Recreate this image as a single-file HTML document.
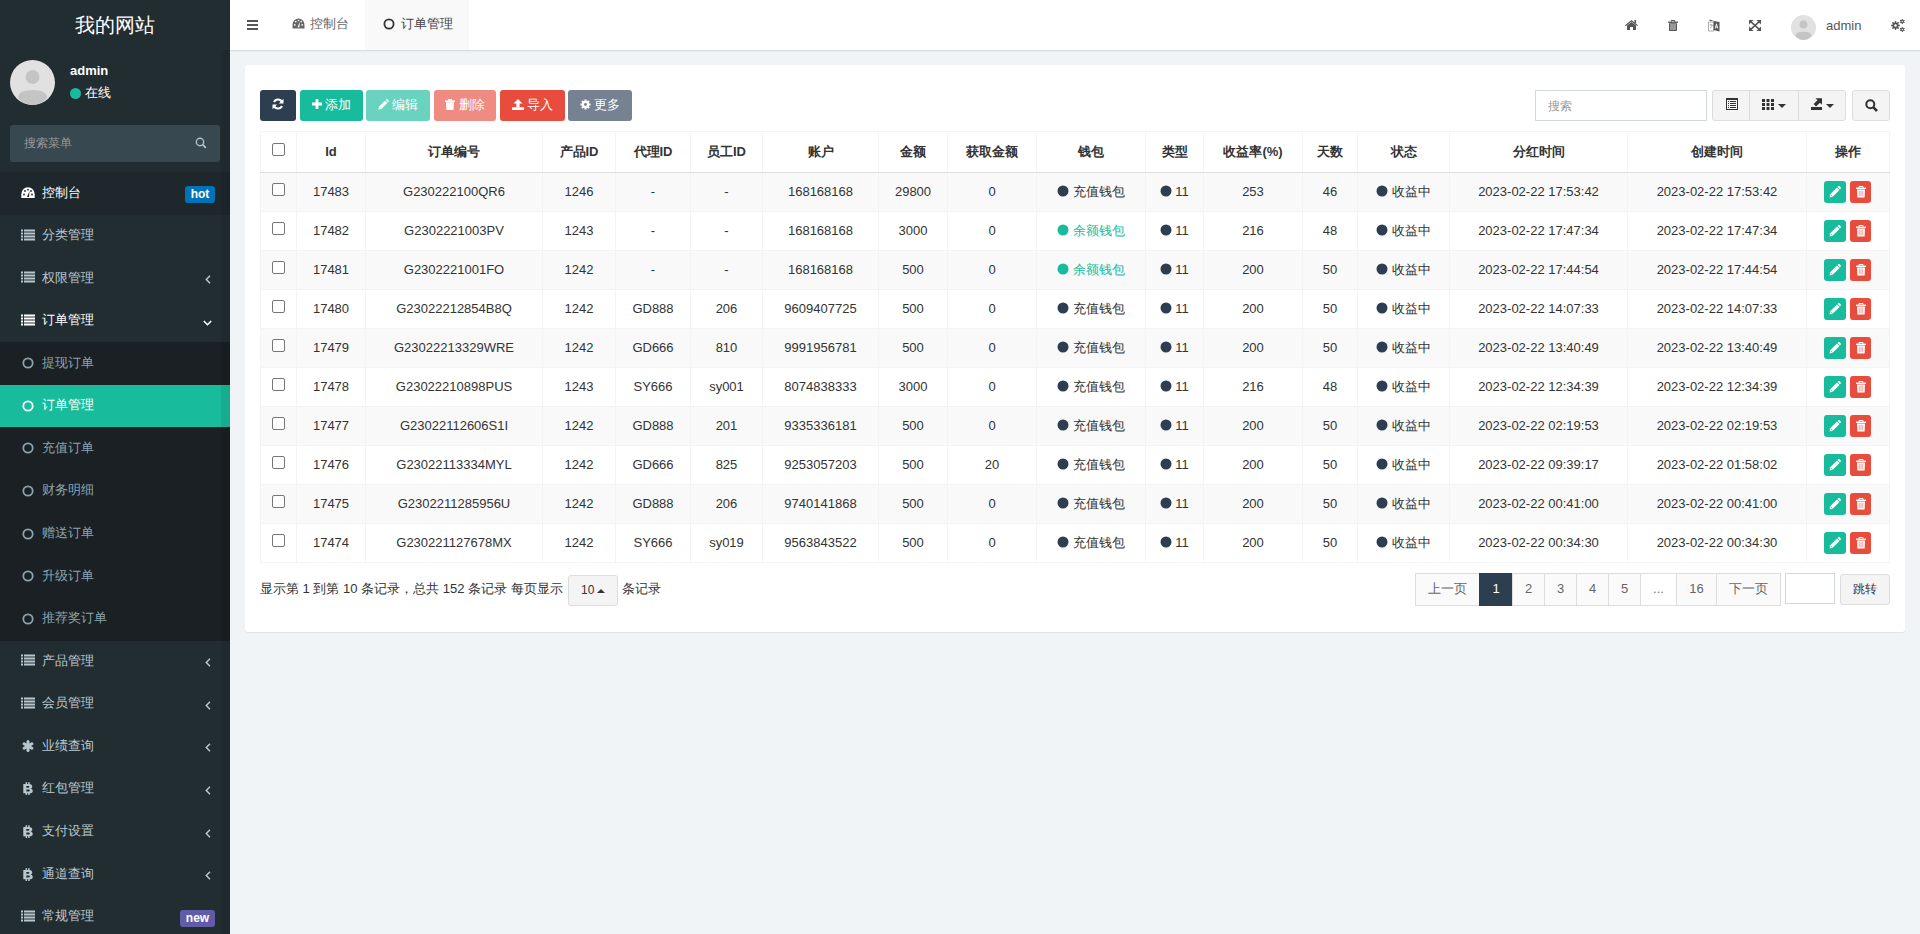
<!DOCTYPE html><html><head><meta charset="utf-8"><title>订单管理</title><style>
*{box-sizing:border-box;margin:0;padding:0}
html,body{width:1920px;height:934px;overflow:hidden}
body{background:#f1f4f6;font-family:"Liberation Sans",sans-serif;font-size:13px;color:#333;position:relative;line-height:1.42857}
.abs{position:absolute}
.sb{position:absolute;left:0;top:0;width:230px;height:934px;background:#222d32}
.logo{position:absolute;left:0;top:0;width:230px;height:50px;line-height:50px;text-align:center;color:#fff;font-size:20px;background:#222d32}
.mi{position:absolute;left:0;width:230px;height:43px;color:#b8c7ce}
.mi .t{position:absolute;left:42px;top:10.5px;font-size:13px;line-height:20px;white-space:nowrap}
.mi svg{position:absolute}
.hdr{position:absolute;left:230px;top:0;width:1690px;height:50px;background:#fff;box-shadow:0 1px 1px rgba(0,0,0,.05)}
.panel{position:absolute;left:245px;top:65px;width:1660px;height:567px;background:#fff;border-radius:3px;box-shadow:0 1px 1px rgba(0,0,0,.07)}
.c{position:absolute;text-align:center;white-space:nowrap;line-height:20px;transform:translate(0.5px,0.5px)}
.btn{position:absolute;height:31px;border-radius:3px;color:#fff;font-size:13px;line-height:30px;text-align:center;white-space:nowrap}
.vl{position:absolute;width:1px;background:#f4f4f4}
.hl{position:absolute;height:1px;background:#f4f4f4}
.cb{position:absolute;width:13px;height:13px;border:1px solid #767676;border-radius:2px;background:#fff}
.ob{position:absolute;width:22px;height:22px;border-radius:3px}.ob svg{position:absolute}
.pg{position:absolute;top:573px;height:33px;border:1px solid #ddd;background:#fafafa;color:#666;text-align:center;line-height:30px;font-size:13px}
</style></head><body>
<div class="sb">
<div class="logo">我的网站</div>
<svg class="abs" style="left:10px;top:60px" width="45" height="45" viewBox="0 0 45 45"><circle cx="22.5" cy="22.5" r="22.5" fill="#e1e1e1"/><circle cx="22.5" cy="17" r="7" fill="#c4c4c4"/><path d="M8 38 Q8 30 22.5 30 Q37 30 37 38 Q30 45 22.5 45 Q15 45 8 38Z" fill="#c4c4c4"/></svg>
<div class="abs" style="left:70px;top:62px;color:#fff;font-weight:bold;font-size:13px;line-height:18px">admin</div>
<div class="abs" style="left:70px;top:88px;width:11px;height:11px;border-radius:50%;background:#18bc9c"></div>
<div class="abs" style="left:85px;top:83px;color:#fff;font-size:13px;line-height:20px">在线</div>
<div class="abs" style="left:10px;top:125px;width:210px;height:37px;background:#374850;border-radius:3px"></div>
<div class="abs" style="left:24px;top:134px;color:#999;font-size:12px;line-height:18px">搜索菜单</div>
<svg class="abs" style="left:195px;top:137px" width="12" height="12" viewBox="0 0 12 12"><circle cx="5" cy="5" r="3.7" fill="none" stroke="#b8c0c4" stroke-width="1.4"/><path d="M7.7 7.7 L10.8 10.8" stroke="#b8c0c4" stroke-width="1.8"/></svg>
<div class="mi" style="top:172.00px;height:43.07px;background:#1e282c;color:#fff">
<div class="t">控制台</div>
<svg style="left:21px;top:15px" width="14" height="11" viewBox="0 0 14 11"><path d="M7 0.3 A6.7 6.7 0 0 0 0.3 7 L0.3 11 L13.7 11 L13.7 7 A6.7 6.7 0 0 0 7 0.3Z" fill="#fff"/><circle cx="3" cy="7.5" r="0.9" fill="#1e282c"/><circle cx="4" cy="4" r="0.9" fill="#1e282c"/><circle cx="7" cy="2.7" r="0.9" fill="#1e282c"/><circle cx="10" cy="4" r="0.9" fill="#1e282c"/><circle cx="11" cy="7.5" r="0.9" fill="#1e282c"/><path d="M6 10 L8.5 4 L8 10Z" fill="#1e282c"/></svg>
<div class="abs" style="left:185px;top:14px;width:30px;height:17px;background:#0073b7;border-radius:3px;color:#fff;font-weight:bold;font-size:12px;line-height:17px;text-align:center">hot</div>
</div>
<div class="mi" style="top:214.57px;height:43.07px;color:#b8c7ce">
<div class="t">分类管理</div>
<svg style="left:21px;top:14px" width="14" height="12" viewBox="0 0 14 12"><g fill="#b8c7ce"><rect x="0" y="0.5" width="2" height="2"/><rect x="3" y="0.5" width="11" height="2"/><rect x="0" y="3.5" width="2" height="2"/><rect x="3" y="3.5" width="11" height="2"/><rect x="0" y="6.5" width="2" height="2"/><rect x="3" y="6.5" width="11" height="2"/><rect x="0" y="9.5" width="2" height="2"/><rect x="3" y="9.5" width="11" height="2"/></g></svg>
</div>
<div class="mi" style="top:257.14px;height:43.07px;color:#b8c7ce">
<div class="t">权限管理</div>
<svg style="left:21px;top:14px" width="14" height="12" viewBox="0 0 14 12"><g fill="#b8c7ce"><rect x="0" y="0.5" width="2" height="2"/><rect x="3" y="0.5" width="11" height="2"/><rect x="0" y="3.5" width="2" height="2"/><rect x="3" y="3.5" width="11" height="2"/><rect x="0" y="6.5" width="2" height="2"/><rect x="3" y="6.5" width="11" height="2"/><rect x="0" y="9.5" width="2" height="2"/><rect x="3" y="9.5" width="11" height="2"/></g></svg>
<svg style="left:205px;top:18px" width="6" height="9" viewBox="0 0 6 9"><path d="M5 0.8 L1.3 4.5 L5 8.2" fill="none" stroke="#b8c7ce" stroke-width="1.5"/></svg>
</div>
<div class="mi" style="top:299.71px;height:43.07px;color:#fff">
<div class="t">订单管理</div>
<svg style="left:21px;top:14px" width="14" height="12" viewBox="0 0 14 12"><g fill="#fff"><rect x="0" y="0.5" width="2" height="2"/><rect x="3" y="0.5" width="11" height="2"/><rect x="0" y="3.5" width="2" height="2"/><rect x="3" y="3.5" width="11" height="2"/><rect x="0" y="6.5" width="2" height="2"/><rect x="3" y="6.5" width="11" height="2"/><rect x="0" y="9.5" width="2" height="2"/><rect x="3" y="9.5" width="11" height="2"/></g></svg>
<svg style="left:203px;top:20px" width="9" height="6" viewBox="0 0 9 6"><path d="M0.8 1 L4.5 4.7 L8.2 1" fill="none" stroke="#fff" stroke-width="1.6"/></svg>
</div>
<div class="mi" style="top:342.28px;height:43.07px;background:#1a2023;color:#8aa4af">
<div class="t">提现订单</div>
<svg style="left:22px;top:15px" width="12" height="12" viewBox="0 0 12 12"><circle cx="6" cy="6" r="4.7" fill="none" stroke="#8aa4af" stroke-width="1.8"/></svg>
</div>
<div class="mi" style="top:384.85px;height:43.07px;background:#18bc9c;color:#fff">
<div class="t">订单管理</div>
<svg style="left:22px;top:15px" width="12" height="12" viewBox="0 0 12 12"><circle cx="6" cy="6" r="4.7" fill="none" stroke="#fff" stroke-width="1.8"/></svg>
</div>
<div class="mi" style="top:427.42px;height:43.07px;background:#1a2023;color:#8aa4af">
<div class="t">充值订单</div>
<svg style="left:22px;top:15px" width="12" height="12" viewBox="0 0 12 12"><circle cx="6" cy="6" r="4.7" fill="none" stroke="#8aa4af" stroke-width="1.8"/></svg>
</div>
<div class="mi" style="top:469.99px;height:43.07px;background:#1a2023;color:#8aa4af">
<div class="t">财务明细</div>
<svg style="left:22px;top:15px" width="12" height="12" viewBox="0 0 12 12"><circle cx="6" cy="6" r="4.7" fill="none" stroke="#8aa4af" stroke-width="1.8"/></svg>
</div>
<div class="mi" style="top:512.56px;height:43.07px;background:#1a2023;color:#8aa4af">
<div class="t">赠送订单</div>
<svg style="left:22px;top:15px" width="12" height="12" viewBox="0 0 12 12"><circle cx="6" cy="6" r="4.7" fill="none" stroke="#8aa4af" stroke-width="1.8"/></svg>
</div>
<div class="mi" style="top:555.13px;height:43.07px;background:#1a2023;color:#8aa4af">
<div class="t">升级订单</div>
<svg style="left:22px;top:15px" width="12" height="12" viewBox="0 0 12 12"><circle cx="6" cy="6" r="4.7" fill="none" stroke="#8aa4af" stroke-width="1.8"/></svg>
</div>
<div class="mi" style="top:597.70px;height:43.07px;background:#1a2023;color:#8aa4af">
<div class="t">推荐奖订单</div>
<svg style="left:22px;top:15px" width="12" height="12" viewBox="0 0 12 12"><circle cx="6" cy="6" r="4.7" fill="none" stroke="#8aa4af" stroke-width="1.8"/></svg>
</div>
<div class="mi" style="top:640.27px;height:43.07px;color:#b8c7ce">
<div class="t">产品管理</div>
<svg style="left:21px;top:14px" width="14" height="12" viewBox="0 0 14 12"><g fill="#b8c7ce"><rect x="0" y="0.5" width="2" height="2"/><rect x="3" y="0.5" width="11" height="2"/><rect x="0" y="3.5" width="2" height="2"/><rect x="3" y="3.5" width="11" height="2"/><rect x="0" y="6.5" width="2" height="2"/><rect x="3" y="6.5" width="11" height="2"/><rect x="0" y="9.5" width="2" height="2"/><rect x="3" y="9.5" width="11" height="2"/></g></svg>
<svg style="left:205px;top:18px" width="6" height="9" viewBox="0 0 6 9"><path d="M5 0.8 L1.3 4.5 L5 8.2" fill="none" stroke="#b8c7ce" stroke-width="1.5"/></svg>
</div>
<div class="mi" style="top:682.84px;height:43.07px;color:#b8c7ce">
<div class="t">会员管理</div>
<svg style="left:21px;top:14px" width="14" height="12" viewBox="0 0 14 12"><g fill="#b8c7ce"><rect x="0" y="0.5" width="2" height="2"/><rect x="3" y="0.5" width="11" height="2"/><rect x="0" y="3.5" width="2" height="2"/><rect x="3" y="3.5" width="11" height="2"/><rect x="0" y="6.5" width="2" height="2"/><rect x="3" y="6.5" width="11" height="2"/><rect x="0" y="9.5" width="2" height="2"/><rect x="3" y="9.5" width="11" height="2"/></g></svg>
<svg style="left:205px;top:18px" width="6" height="9" viewBox="0 0 6 9"><path d="M5 0.8 L1.3 4.5 L5 8.2" fill="none" stroke="#b8c7ce" stroke-width="1.5"/></svg>
</div>
<div class="mi" style="top:725.41px;height:43.07px;color:#b8c7ce">
<div class="t">业绩查询</div>
<svg style="left:22px;top:15px" width="12" height="12" viewBox="0 0 12 12"><g stroke="#b8c7ce" stroke-width="3" stroke-linecap="round"><path d="M6 1.5 V10.5"/><path d="M2.1 3.75 L9.9 8.25"/><path d="M2.1 8.25 L9.9 3.75"/></g><circle cx="6" cy="6" r="2.5" fill="#b8c7ce"/></svg>
<svg style="left:205px;top:18px" width="6" height="9" viewBox="0 0 6 9"><path d="M5 0.8 L1.3 4.5 L5 8.2" fill="none" stroke="#b8c7ce" stroke-width="1.5"/></svg>
</div>
<div class="mi" style="top:767.98px;height:43.07px;color:#b8c7ce">
<div class="t">红包管理</div>
<svg style="left:23px;top:14.5px" width="10" height="13" viewBox="0 0 10 13"><path d="M0.3 2 H6 Q9.3 2 9.3 4.6 Q9.3 6 7.8 6.5 Q9.8 7 9.8 9 Q9.8 11.3 6.4 11.3 H0.3Z M3.3 3.9 V5.7 H5.4 Q6.4 5.7 6.4 4.8 Q6.4 3.9 5.4 3.9Z M3.3 7.4 V9.4 H5.8 Q6.9 9.4 6.9 8.4 Q6.9 7.4 5.8 7.4Z" fill="#b8c7ce" fill-rule="evenodd"/><rect x="2.6" y="0.2" width="1.5" height="2.3" fill="#b8c7ce"/><rect x="5.2" y="0.2" width="1.5" height="2.3" fill="#b8c7ce"/><rect x="2.6" y="10.8" width="1.5" height="2.2" fill="#b8c7ce"/><rect x="5.2" y="10.8" width="1.5" height="2.2" fill="#b8c7ce"/></svg>
<svg style="left:205px;top:18px" width="6" height="9" viewBox="0 0 6 9"><path d="M5 0.8 L1.3 4.5 L5 8.2" fill="none" stroke="#b8c7ce" stroke-width="1.5"/></svg>
</div>
<div class="mi" style="top:810.55px;height:43.07px;color:#b8c7ce">
<div class="t">支付设置</div>
<svg style="left:23px;top:14.5px" width="10" height="13" viewBox="0 0 10 13"><path d="M0.3 2 H6 Q9.3 2 9.3 4.6 Q9.3 6 7.8 6.5 Q9.8 7 9.8 9 Q9.8 11.3 6.4 11.3 H0.3Z M3.3 3.9 V5.7 H5.4 Q6.4 5.7 6.4 4.8 Q6.4 3.9 5.4 3.9Z M3.3 7.4 V9.4 H5.8 Q6.9 9.4 6.9 8.4 Q6.9 7.4 5.8 7.4Z" fill="#b8c7ce" fill-rule="evenodd"/><rect x="2.6" y="0.2" width="1.5" height="2.3" fill="#b8c7ce"/><rect x="5.2" y="0.2" width="1.5" height="2.3" fill="#b8c7ce"/><rect x="2.6" y="10.8" width="1.5" height="2.2" fill="#b8c7ce"/><rect x="5.2" y="10.8" width="1.5" height="2.2" fill="#b8c7ce"/></svg>
<svg style="left:205px;top:18px" width="6" height="9" viewBox="0 0 6 9"><path d="M5 0.8 L1.3 4.5 L5 8.2" fill="none" stroke="#b8c7ce" stroke-width="1.5"/></svg>
</div>
<div class="mi" style="top:853.12px;height:43.07px;color:#b8c7ce">
<div class="t">通道查询</div>
<svg style="left:23px;top:14.5px" width="10" height="13" viewBox="0 0 10 13"><path d="M0.3 2 H6 Q9.3 2 9.3 4.6 Q9.3 6 7.8 6.5 Q9.8 7 9.8 9 Q9.8 11.3 6.4 11.3 H0.3Z M3.3 3.9 V5.7 H5.4 Q6.4 5.7 6.4 4.8 Q6.4 3.9 5.4 3.9Z M3.3 7.4 V9.4 H5.8 Q6.9 9.4 6.9 8.4 Q6.9 7.4 5.8 7.4Z" fill="#b8c7ce" fill-rule="evenodd"/><rect x="2.6" y="0.2" width="1.5" height="2.3" fill="#b8c7ce"/><rect x="5.2" y="0.2" width="1.5" height="2.3" fill="#b8c7ce"/><rect x="2.6" y="10.8" width="1.5" height="2.2" fill="#b8c7ce"/><rect x="5.2" y="10.8" width="1.5" height="2.2" fill="#b8c7ce"/></svg>
<svg style="left:205px;top:18px" width="6" height="9" viewBox="0 0 6 9"><path d="M5 0.8 L1.3 4.5 L5 8.2" fill="none" stroke="#b8c7ce" stroke-width="1.5"/></svg>
</div>
<div class="mi" style="top:895.69px;height:43.07px;color:#b8c7ce">
<div class="t">常规管理</div>
<svg style="left:21px;top:14px" width="14" height="12" viewBox="0 0 14 12"><g fill="#b8c7ce"><rect x="0" y="0.5" width="2" height="2"/><rect x="3" y="0.5" width="11" height="2"/><rect x="0" y="3.5" width="2" height="2"/><rect x="3" y="3.5" width="11" height="2"/><rect x="0" y="6.5" width="2" height="2"/><rect x="3" y="6.5" width="11" height="2"/><rect x="0" y="9.5" width="2" height="2"/><rect x="3" y="9.5" width="11" height="2"/></g></svg>
<div class="abs" style="left:180px;top:14px;width:35px;height:17px;background:#605ca8;border-radius:3px;color:#fff;font-weight:bold;font-size:12px;line-height:17px;text-align:center">new</div>
</div>
<div class="abs" style="left:221px;top:50px;width:9px;height:884px;background:rgba(0,0,0,.08)"></div>
</div>
<div class="hdr"></div>
<div class="abs" style="left:230px;top:50px;width:1690px;height:1px;background:#d9dee1"></div>
<div class="abs" style="left:230px;top:51px;width:1690px;height:1px;background:#e8ecef"></div>
<svg class="abs" style="left:247px;top:20px" width="11" height="10" viewBox="0 0 11 10"><g fill="#555"><rect y="0" width="11" height="2"/><rect y="4" width="11" height="2"/><rect y="8" width="11" height="2"/></g></svg>
<svg class="abs" style="left:292px;top:18px" width="13" height="11" viewBox="0 0 14 12"><path d="M7 0.5 A6.5 6.5 0 0 0 0.5 7 L0.5 11.5 L13.5 11.5 L13.5 7 A6.5 6.5 0 0 0 7 0.5Z" fill="#666"/><circle cx="3" cy="7.5" r="0.9" fill="#fff"/><circle cx="4" cy="4" r="0.9" fill="#fff"/><circle cx="7" cy="2.7" r="0.9" fill="#fff"/><circle cx="10" cy="4" r="0.9" fill="#fff"/><circle cx="11" cy="7.5" r="0.9" fill="#fff"/><path d="M6 10 L8.5 4 L8 10Z" fill="#fff"/></svg>
<div class="abs" style="left:310px;top:14px;color:#666;font-size:13px;line-height:20px">控制台</div>
<div class="abs" style="left:365px;top:0;width:104px;height:50px;background:#f9f9f9"></div>
<svg class="abs" style="left:383px;top:18px" width="12" height="12" viewBox="0 0 12 12"><circle cx="6" cy="6" r="4.6" fill="none" stroke="#333" stroke-width="1.8"/></svg>
<div class="abs" style="left:401px;top:14px;color:#444;font-size:13px;line-height:20px">订单管理</div>
<svg class="abs" style="left:1625px;top:20px" width="13" height="10" viewBox="0 0 13 10"><path d="M6.5 0 L0 5.2 L0.9 6.1 L6.5 1.6 L12.1 6.1 L13 5.2Z" fill="#555"/><path d="M2 5.4 L6.5 1.9 L11 5.4 V10 H8 V7 H5 V10 H2Z" fill="#555"/><rect x="9.5" y="0" width="1.6" height="3.2" fill="#555"/></svg>
<svg class="abs" style="left:1668px;top:20px" width="10" height="11" viewBox="0 0 10 11"><rect x="0" y="1.6" width="10" height="1.3" fill="#555"/><path d="M3.2 1.8 V0.5 H6.8 V1.8" fill="none" stroke="#555" stroke-width="1"/><path d="M1 3.2 H9 V10.2 Q9 11 8.2 11 H1.8 Q1 11 1 10.2Z" fill="#555"/><g fill="#fff" opacity="0.8"><rect x="2.5" y="4" width="1" height="6"/><rect x="4.5" y="4" width="1" height="6"/><rect x="6.5" y="4" width="1" height="6"/></g></svg>
<svg class="abs" style="left:1708px;top:19px" width="12" height="13" viewBox="0 0 12 13"><path d="M0.5 3 H6 V12 H0.5Z" fill="#fff" stroke="#999" stroke-width="0.8"/><path d="M1.5 0.5 L6 2 H1.5Z" fill="#555"/><path d="M5.5 2 L11.5 3 V12.5 L5.5 11Z" fill="#555"/><path d="M7.2 9.5 L8.5 4.8 L9.8 9.5 M7.7 8 H9.3" stroke="#fff" stroke-width="0.9" fill="none"/><path d="M1.8 6 H4.5 M3 5 V6 M2 9 Q4 8 4.5 6" stroke="#888" stroke-width="0.7" fill="none"/></svg>
<svg class="abs" style="left:1749px;top:20px" width="12" height="11" viewBox="0 0 12 11"><g fill="#555"><path d="M0 0 H4.6 L0 4.4Z"/><path d="M12 0 V4.4 L7.4 0Z"/><path d="M0 11 V6.6 L4.6 11Z"/><path d="M12 11 H7.4 L12 6.6Z"/></g><path d="M1.5 1.4 L10.5 9.6 M10.5 1.4 L1.5 9.6" stroke="#555" stroke-width="1.5"/></svg>
<svg class="abs" style="left:1791px;top:15px" width="25" height="25" viewBox="0 0 45 45"><circle cx="22.5" cy="22.5" r="22.5" fill="#e1e1e1"/><circle cx="22.5" cy="17" r="7" fill="#c4c4c4"/><path d="M8 38 Q8 30 22.5 30 Q37 30 37 38 Q30 45 22.5 45 Q15 45 8 38Z" fill="#c4c4c4"/></svg>
<div class="abs" style="left:1826px;top:16px;color:#555;font-size:13px;line-height:20px">admin</div>
<svg class="abs" style="left:1891px;top:19px" width="14" height="13" viewBox="0 0 14 13"><circle cx="4.5" cy="6.5" r="3.0" fill="#555"/><rect x="3.75" y="2.10" width="1.5" height="2.00" fill="#555" transform="rotate(0.0 4.5 6.5)"/><rect x="3.75" y="2.10" width="1.5" height="2.00" fill="#555" transform="rotate(45.0 4.5 6.5)"/><rect x="3.75" y="2.10" width="1.5" height="2.00" fill="#555" transform="rotate(90.0 4.5 6.5)"/><rect x="3.75" y="2.10" width="1.5" height="2.00" fill="#555" transform="rotate(135.0 4.5 6.5)"/><rect x="3.75" y="2.10" width="1.5" height="2.00" fill="#555" transform="rotate(180.0 4.5 6.5)"/><rect x="3.75" y="2.10" width="1.5" height="2.00" fill="#555" transform="rotate(225.0 4.5 6.5)"/><rect x="3.75" y="2.10" width="1.5" height="2.00" fill="#555" transform="rotate(270.0 4.5 6.5)"/><rect x="3.75" y="2.10" width="1.5" height="2.00" fill="#555" transform="rotate(315.0 4.5 6.5)"/><circle cx="4.5" cy="6.5" r="1.3" fill="#fff"/><circle cx="11.3" cy="2.5" r="1.7" fill="#555"/><rect x="10.75" y="0.00" width="1.1" height="1.40" fill="#555" transform="rotate(0.0 11.3 2.5)"/><rect x="10.75" y="0.00" width="1.1" height="1.40" fill="#555" transform="rotate(60.0 11.3 2.5)"/><rect x="10.75" y="0.00" width="1.1" height="1.40" fill="#555" transform="rotate(120.0 11.3 2.5)"/><rect x="10.75" y="0.00" width="1.1" height="1.40" fill="#555" transform="rotate(180.0 11.3 2.5)"/><rect x="10.75" y="0.00" width="1.1" height="1.40" fill="#555" transform="rotate(240.0 11.3 2.5)"/><rect x="10.75" y="0.00" width="1.1" height="1.40" fill="#555" transform="rotate(300.0 11.3 2.5)"/><circle cx="11.3" cy="2.5" r="0.7" fill="#fff"/><circle cx="11.3" cy="10.5" r="1.7" fill="#555"/><rect x="10.75" y="8.00" width="1.1" height="1.40" fill="#555" transform="rotate(0.0 11.3 10.5)"/><rect x="10.75" y="8.00" width="1.1" height="1.40" fill="#555" transform="rotate(60.0 11.3 10.5)"/><rect x="10.75" y="8.00" width="1.1" height="1.40" fill="#555" transform="rotate(120.0 11.3 10.5)"/><rect x="10.75" y="8.00" width="1.1" height="1.40" fill="#555" transform="rotate(180.0 11.3 10.5)"/><rect x="10.75" y="8.00" width="1.1" height="1.40" fill="#555" transform="rotate(240.0 11.3 10.5)"/><rect x="10.75" y="8.00" width="1.1" height="1.40" fill="#555" transform="rotate(300.0 11.3 10.5)"/><circle cx="11.3" cy="10.5" r="0.7" fill="#fff"/></svg>
<div class="panel"></div>
<div class="btn" style="left:260px;top:90px;width:36px;background:#2c3e50"><svg width="12" height="12" viewBox="0 0 12 12" style="vertical-align:-1px"><path d="M10 4.2 A4.4 4.4 0 0 0 2 4" fill="none" stroke="#fff" stroke-width="2"/><path d="M11.5 0.8 V5.5 H6.8Z" fill="#fff"/><path d="M2 7.8 A4.4 4.4 0 0 0 10 8" fill="none" stroke="#fff" stroke-width="2"/><path d="M0.5 11.2 V6.5 H5.2Z" fill="#fff"/></svg></div>
<div class="btn" style="left:300px;top:90px;width:63px;background:#18bc9c"><svg width="10" height="10" viewBox="0 0 10 10" style="vertical-align:-0px"><path d="M3.6 0 H6.4 V3.6 H10 V6.4 H6.4 V10 H3.6 V6.4 H0 V3.6 H3.6Z" fill="#fff"/></svg> 添加</div>
<div class="btn" style="left:366px;top:90px;width:64px;background:#69d3bf"><svg width="11" height="11" viewBox="0 0 12 12" style="vertical-align:-1px"><path d="M0.5 11.5 L1.2 8.3 L7.6 1.9 L10.1 4.4 L3.7 10.8Z" fill="#fff"/><path d="M8.3 1.2 L9.2 0.3 Q9.8 -0.2 10.4 0.4 L11.6 1.6 Q12.1 2.2 11.6 2.8 L10.8 3.7Z" fill="#fff"/></svg> 编辑</div>
<div class="btn" style="left:434px;top:90px;width:62px;background:#ef8b80"><svg width="10" height="11" viewBox="0 0 10 11" style="vertical-align:-1px"><rect x="0" y="1.4" width="10" height="1.5" fill="#fff"/><rect x="3" y="0" width="4" height="1.8" fill="#fff"/><path d="M1 3.3 H9 L8.5 11 H1.5Z" fill="#fff"/></svg> 删除</div>
<div class="btn" style="left:500px;top:90px;width:65px;background:#e74c3c"><svg width="12" height="11" viewBox="0 0 12 11" style="vertical-align:-1px"><path d="M6 0 L10.5 4.5 H7.6 V8 H4.4 V4.5 H1.5Z" fill="#fff"/><rect x="0" y="8.2" width="12" height="2.8" fill="#fff"/></svg> 导入</div>
<div class="btn" style="left:568px;top:90px;width:64px;background:#768291"><svg width="11" height="11" viewBox="0 0 12 12" style="vertical-align:-1px"><g stroke="#fff" stroke-width="2.2"><path d="M6 0.5 V11.5 M0.5 6 H11.5 M2.1 2.1 L9.9 9.9 M2.1 9.9 L9.9 2.1"/></g><circle cx="6" cy="6" r="4" fill="#fff"/><circle cx="6" cy="6" r="1.6" fill="#768291"/></svg> 更多</div>
<div class="abs" style="left:1535px;top:90px;width:172px;height:31px;border:1px solid #d2d6de;background:#fff"></div>
<div class="abs" style="left:1548px;top:96.5px;color:#999;font-size:12px;line-height:18px">搜索</div>
<div class="abs" style="left:1712px;top:90px;width:134px;height:31px;border:1px solid #ddd;border-radius:3px;background:#f4f4f4"></div>
<div class="abs" style="left:1749px;top:90px;width:1px;height:31px;background:#ddd"></div>
<div class="abs" style="left:1798px;top:90px;width:1px;height:31px;background:#ddd"></div>
<div class="abs" style="left:1852px;top:90px;width:38px;height:31px;border:1px solid #ddd;border-radius:3px;background:#f4f4f4"></div>
<svg class="abs" style="left:1726px;top:98px" width="12" height="12" viewBox="0 0 12 12"><rect x="0.5" y="0.5" width="11" height="11" fill="none" stroke="#333" stroke-width="1"/><rect x="0" y="0" width="12" height="2" fill="#333"/><g fill="#333"><rect x="2" y="3" width="1" height="1"/><rect x="4" y="3" width="6" height="1"/><rect x="2" y="5" width="1" height="1"/><rect x="4" y="5" width="6" height="1"/><rect x="2" y="7" width="1" height="1"/><rect x="4" y="7" width="6" height="1"/><rect x="2" y="9" width="1" height="1"/><rect x="4" y="9" width="6" height="1"/></g></svg>
<svg class="abs" style="left:1762px;top:99px" width="12" height="11" viewBox="0 0 12 11"><g fill="#333"><rect x="0" y="0" width="3" height="3"/><rect x="4.5" y="0" width="3" height="3"/><rect x="9" y="0" width="3" height="3"/><rect x="0" y="4" width="3" height="3"/><rect x="4.5" y="4" width="3" height="3"/><rect x="9" y="4" width="3" height="3"/><rect x="0" y="8" width="3" height="3"/><rect x="4.5" y="8" width="3" height="3"/><rect x="9" y="8" width="3" height="3"/></g></svg>
<svg class="abs" style="left:1778px;top:104px" width="8" height="4" viewBox="0 0 8 4"><path d="M0 0 H8 L4 4Z" fill="#333"/></svg>
<svg class="abs" style="left:1811px;top:98px" width="11" height="12" viewBox="0 0 11 12"><path d="M4.5 0.2 H11 V6.7 L9 4.7 L5 8.4 L2.6 6 L6.5 2.2Z" fill="#333"/><rect x="0" y="9" width="11" height="3" fill="#333"/></svg>
<svg class="abs" style="left:1826px;top:104px" width="8" height="4" viewBox="0 0 8 4"><path d="M0 0 H8 L4 4Z" fill="#333"/></svg>
<svg class="abs" style="left:1865px;top:99px" width="13" height="13" viewBox="0 0 13 13"><circle cx="5.3" cy="5.3" r="4" fill="none" stroke="#333" stroke-width="2"/><path d="M8.2 8.2 L12 12" stroke="#333" stroke-width="2.6"/></svg>
<div class="abs" style="left:260px;top:173px;width:1630px;height:38px;background:#f9f9f9"></div>
<div class="abs" style="left:260px;top:251px;width:1630px;height:38px;background:#f9f9f9"></div>
<div class="abs" style="left:260px;top:329px;width:1630px;height:38px;background:#f9f9f9"></div>
<div class="abs" style="left:260px;top:407px;width:1630px;height:38px;background:#f9f9f9"></div>
<div class="abs" style="left:260px;top:485px;width:1630px;height:38px;background:#f9f9f9"></div>
<div class="hl" style="left:260px;top:131px;width:1630px"></div>
<div class="hl" style="left:260px;top:211px;width:1630px"></div>
<div class="hl" style="left:260px;top:250px;width:1630px"></div>
<div class="hl" style="left:260px;top:289px;width:1630px"></div>
<div class="hl" style="left:260px;top:328px;width:1630px"></div>
<div class="hl" style="left:260px;top:367px;width:1630px"></div>
<div class="hl" style="left:260px;top:406px;width:1630px"></div>
<div class="hl" style="left:260px;top:445px;width:1630px"></div>
<div class="hl" style="left:260px;top:484px;width:1630px"></div>
<div class="hl" style="left:260px;top:523px;width:1630px"></div>
<div class="hl" style="left:260px;top:562px;width:1630px"></div>
<div class="vl" style="left:260px;top:131px;height:431px"></div>
<div class="vl" style="left:296px;top:131px;height:431px"></div>
<div class="vl" style="left:365px;top:131px;height:431px"></div>
<div class="vl" style="left:542px;top:131px;height:431px"></div>
<div class="vl" style="left:615px;top:131px;height:431px"></div>
<div class="vl" style="left:690px;top:131px;height:431px"></div>
<div class="vl" style="left:762px;top:131px;height:431px"></div>
<div class="vl" style="left:878px;top:131px;height:431px"></div>
<div class="vl" style="left:947px;top:131px;height:431px"></div>
<div class="vl" style="left:1036px;top:131px;height:431px"></div>
<div class="vl" style="left:1145px;top:131px;height:431px"></div>
<div class="vl" style="left:1203px;top:131px;height:431px"></div>
<div class="vl" style="left:1302px;top:131px;height:431px"></div>
<div class="vl" style="left:1357px;top:131px;height:431px"></div>
<div class="vl" style="left:1449px;top:131px;height:431px"></div>
<div class="vl" style="left:1627px;top:131px;height:431px"></div>
<div class="vl" style="left:1806px;top:131px;height:431px"></div>
<div class="vl" style="left:1889px;top:131px;height:431px"></div>
<div class="abs" style="left:260px;top:172px;width:1630px;height:1px;background:#ddd"></div>
<div class="cb" style="left:272px;top:143px"></div>
<div class="c" style="left:296px;top:141px;width:69px;font-weight:bold">Id</div>
<div class="c" style="left:365px;top:141px;width:177px;font-weight:bold">订单编号</div>
<div class="c" style="left:542px;top:141px;width:73px;font-weight:bold">产品ID</div>
<div class="c" style="left:615px;top:141px;width:75px;font-weight:bold">代理ID</div>
<div class="c" style="left:690px;top:141px;width:72px;font-weight:bold">员工ID</div>
<div class="c" style="left:762px;top:141px;width:116px;font-weight:bold">账户</div>
<div class="c" style="left:878px;top:141px;width:69px;font-weight:bold">金额</div>
<div class="c" style="left:947px;top:141px;width:89px;font-weight:bold">获取金额</div>
<div class="c" style="left:1036px;top:141px;width:109px;font-weight:bold">钱包</div>
<div class="c" style="left:1145px;top:141px;width:58px;font-weight:bold">类型</div>
<div class="c" style="left:1203px;top:141px;width:99px;font-weight:bold">收益率(%)</div>
<div class="c" style="left:1302px;top:141px;width:55px;font-weight:bold">天数</div>
<div class="c" style="left:1357px;top:141px;width:92px;font-weight:bold">状态</div>
<div class="c" style="left:1449px;top:141px;width:178px;font-weight:bold">分红时间</div>
<div class="c" style="left:1627px;top:141px;width:179px;font-weight:bold">创建时间</div>
<div class="c" style="left:1806px;top:141px;width:83px;font-weight:bold">操作</div>
<div class="cb" style="left:272px;top:183px"></div>
<div class="c" style="left:296px;top:181px;width:69px">17483</div>
<div class="c" style="left:365px;top:181px;width:177px">G230222100QR6</div>
<div class="c" style="left:542px;top:181px;width:73px">1246</div>
<div class="c" style="left:615px;top:181px;width:75px">-</div>
<div class="c" style="left:690px;top:181px;width:72px">-</div>
<div class="c" style="left:762px;top:181px;width:116px">168168168</div>
<div class="c" style="left:878px;top:181px;width:69px">29800</div>
<div class="c" style="left:947px;top:181px;width:89px">0</div>
<div class="c" style="left:1036px;top:181px;width:109px;color:#333"><span style="display:inline-block;width:11px;height:11px;border-radius:50%;background:#2c3e50;vertical-align:-1px;margin-right:4px"></span>充值钱包</div>
<div class="c" style="left:1145px;top:181px;width:58px"><span style="display:inline-block;width:11px;height:11px;border-radius:50%;background:#2c3e50;vertical-align:-1px;margin-right:4px"></span>11</div>
<div class="c" style="left:1203px;top:181px;width:99px">253</div>
<div class="c" style="left:1302px;top:181px;width:55px">46</div>
<div class="c" style="left:1357px;top:181px;width:92px"><span style="display:inline-block;width:11px;height:11px;border-radius:50%;background:#2c3e50;vertical-align:-1px;margin-right:4px"></span>收益中</div>
<div class="c" style="left:1449px;top:181px;width:178px">2023-02-22 17:53:42</div>
<div class="c" style="left:1627px;top:181px;width:179px">2023-02-22 17:53:42</div>
<div class="ob" style="left:1824px;top:181px;background:#18bc9c"><svg style="left:5px;top:5px" width="12" height="12" viewBox="0 0 12 12"><path d="M0.5 11.5 L1.2 8.3 L8 1.5 L10.5 4 L3.7 10.8Z" fill="#fff"/><path d="M8.6 0.9 L9.4 0.1 Q10 -0.3 10.6 0.3 L11.7 1.4 Q12.2 2 11.7 2.6 L11 3.4Z" fill="#fff"/><path d="M1.7 8.6 L3.4 10.3" stroke="#18bc9c" stroke-width="0.7"/></svg></div>
<div class="ob" style="left:1850px;top:181px;width:21px;background:#e74c3c"><svg style="left:5.5px;top:5px" width="10" height="12" viewBox="0 0 10 12"><rect x="0" y="1.6" width="10" height="1.4" fill="#fff"/><path d="M3 1.8 V0.5 H7 V1.8" fill="none" stroke="#fff" stroke-width="1"/><path d="M1 3.4 H9 L8.6 11.6 H1.4Z" fill="#fff"/><g fill="#e74c3c" opacity="0.55"><rect x="2.8" y="4.8" width="0.9" height="5.4"/><rect x="4.55" y="4.8" width="0.9" height="5.4"/><rect x="6.3" y="4.8" width="0.9" height="5.4"/></g></svg></div>
<div class="cb" style="left:272px;top:222px"></div>
<div class="c" style="left:296px;top:220px;width:69px">17482</div>
<div class="c" style="left:365px;top:220px;width:177px">G2302221003PV</div>
<div class="c" style="left:542px;top:220px;width:73px">1243</div>
<div class="c" style="left:615px;top:220px;width:75px">-</div>
<div class="c" style="left:690px;top:220px;width:72px">-</div>
<div class="c" style="left:762px;top:220px;width:116px">168168168</div>
<div class="c" style="left:878px;top:220px;width:69px">3000</div>
<div class="c" style="left:947px;top:220px;width:89px">0</div>
<div class="c" style="left:1036px;top:220px;width:109px;color:#18bc9c"><span style="display:inline-block;width:11px;height:11px;border-radius:50%;background:#18bc9c;vertical-align:-1px;margin-right:4px"></span>余额钱包</div>
<div class="c" style="left:1145px;top:220px;width:58px"><span style="display:inline-block;width:11px;height:11px;border-radius:50%;background:#2c3e50;vertical-align:-1px;margin-right:4px"></span>11</div>
<div class="c" style="left:1203px;top:220px;width:99px">216</div>
<div class="c" style="left:1302px;top:220px;width:55px">48</div>
<div class="c" style="left:1357px;top:220px;width:92px"><span style="display:inline-block;width:11px;height:11px;border-radius:50%;background:#2c3e50;vertical-align:-1px;margin-right:4px"></span>收益中</div>
<div class="c" style="left:1449px;top:220px;width:178px">2023-02-22 17:47:34</div>
<div class="c" style="left:1627px;top:220px;width:179px">2023-02-22 17:47:34</div>
<div class="ob" style="left:1824px;top:220px;background:#18bc9c"><svg style="left:5px;top:5px" width="12" height="12" viewBox="0 0 12 12"><path d="M0.5 11.5 L1.2 8.3 L8 1.5 L10.5 4 L3.7 10.8Z" fill="#fff"/><path d="M8.6 0.9 L9.4 0.1 Q10 -0.3 10.6 0.3 L11.7 1.4 Q12.2 2 11.7 2.6 L11 3.4Z" fill="#fff"/><path d="M1.7 8.6 L3.4 10.3" stroke="#18bc9c" stroke-width="0.7"/></svg></div>
<div class="ob" style="left:1850px;top:220px;width:21px;background:#e74c3c"><svg style="left:5.5px;top:5px" width="10" height="12" viewBox="0 0 10 12"><rect x="0" y="1.6" width="10" height="1.4" fill="#fff"/><path d="M3 1.8 V0.5 H7 V1.8" fill="none" stroke="#fff" stroke-width="1"/><path d="M1 3.4 H9 L8.6 11.6 H1.4Z" fill="#fff"/><g fill="#e74c3c" opacity="0.55"><rect x="2.8" y="4.8" width="0.9" height="5.4"/><rect x="4.55" y="4.8" width="0.9" height="5.4"/><rect x="6.3" y="4.8" width="0.9" height="5.4"/></g></svg></div>
<div class="cb" style="left:272px;top:261px"></div>
<div class="c" style="left:296px;top:259px;width:69px">17481</div>
<div class="c" style="left:365px;top:259px;width:177px">G2302221001FO</div>
<div class="c" style="left:542px;top:259px;width:73px">1242</div>
<div class="c" style="left:615px;top:259px;width:75px">-</div>
<div class="c" style="left:690px;top:259px;width:72px">-</div>
<div class="c" style="left:762px;top:259px;width:116px">168168168</div>
<div class="c" style="left:878px;top:259px;width:69px">500</div>
<div class="c" style="left:947px;top:259px;width:89px">0</div>
<div class="c" style="left:1036px;top:259px;width:109px;color:#18bc9c"><span style="display:inline-block;width:11px;height:11px;border-radius:50%;background:#18bc9c;vertical-align:-1px;margin-right:4px"></span>余额钱包</div>
<div class="c" style="left:1145px;top:259px;width:58px"><span style="display:inline-block;width:11px;height:11px;border-radius:50%;background:#2c3e50;vertical-align:-1px;margin-right:4px"></span>11</div>
<div class="c" style="left:1203px;top:259px;width:99px">200</div>
<div class="c" style="left:1302px;top:259px;width:55px">50</div>
<div class="c" style="left:1357px;top:259px;width:92px"><span style="display:inline-block;width:11px;height:11px;border-radius:50%;background:#2c3e50;vertical-align:-1px;margin-right:4px"></span>收益中</div>
<div class="c" style="left:1449px;top:259px;width:178px">2023-02-22 17:44:54</div>
<div class="c" style="left:1627px;top:259px;width:179px">2023-02-22 17:44:54</div>
<div class="ob" style="left:1824px;top:259px;background:#18bc9c"><svg style="left:5px;top:5px" width="12" height="12" viewBox="0 0 12 12"><path d="M0.5 11.5 L1.2 8.3 L8 1.5 L10.5 4 L3.7 10.8Z" fill="#fff"/><path d="M8.6 0.9 L9.4 0.1 Q10 -0.3 10.6 0.3 L11.7 1.4 Q12.2 2 11.7 2.6 L11 3.4Z" fill="#fff"/><path d="M1.7 8.6 L3.4 10.3" stroke="#18bc9c" stroke-width="0.7"/></svg></div>
<div class="ob" style="left:1850px;top:259px;width:21px;background:#e74c3c"><svg style="left:5.5px;top:5px" width="10" height="12" viewBox="0 0 10 12"><rect x="0" y="1.6" width="10" height="1.4" fill="#fff"/><path d="M3 1.8 V0.5 H7 V1.8" fill="none" stroke="#fff" stroke-width="1"/><path d="M1 3.4 H9 L8.6 11.6 H1.4Z" fill="#fff"/><g fill="#e74c3c" opacity="0.55"><rect x="2.8" y="4.8" width="0.9" height="5.4"/><rect x="4.55" y="4.8" width="0.9" height="5.4"/><rect x="6.3" y="4.8" width="0.9" height="5.4"/></g></svg></div>
<div class="cb" style="left:272px;top:300px"></div>
<div class="c" style="left:296px;top:298px;width:69px">17480</div>
<div class="c" style="left:365px;top:298px;width:177px">G23022212854B8Q</div>
<div class="c" style="left:542px;top:298px;width:73px">1242</div>
<div class="c" style="left:615px;top:298px;width:75px">GD888</div>
<div class="c" style="left:690px;top:298px;width:72px">206</div>
<div class="c" style="left:762px;top:298px;width:116px">9609407725</div>
<div class="c" style="left:878px;top:298px;width:69px">500</div>
<div class="c" style="left:947px;top:298px;width:89px">0</div>
<div class="c" style="left:1036px;top:298px;width:109px;color:#333"><span style="display:inline-block;width:11px;height:11px;border-radius:50%;background:#2c3e50;vertical-align:-1px;margin-right:4px"></span>充值钱包</div>
<div class="c" style="left:1145px;top:298px;width:58px"><span style="display:inline-block;width:11px;height:11px;border-radius:50%;background:#2c3e50;vertical-align:-1px;margin-right:4px"></span>11</div>
<div class="c" style="left:1203px;top:298px;width:99px">200</div>
<div class="c" style="left:1302px;top:298px;width:55px">50</div>
<div class="c" style="left:1357px;top:298px;width:92px"><span style="display:inline-block;width:11px;height:11px;border-radius:50%;background:#2c3e50;vertical-align:-1px;margin-right:4px"></span>收益中</div>
<div class="c" style="left:1449px;top:298px;width:178px">2023-02-22 14:07:33</div>
<div class="c" style="left:1627px;top:298px;width:179px">2023-02-22 14:07:33</div>
<div class="ob" style="left:1824px;top:298px;background:#18bc9c"><svg style="left:5px;top:5px" width="12" height="12" viewBox="0 0 12 12"><path d="M0.5 11.5 L1.2 8.3 L8 1.5 L10.5 4 L3.7 10.8Z" fill="#fff"/><path d="M8.6 0.9 L9.4 0.1 Q10 -0.3 10.6 0.3 L11.7 1.4 Q12.2 2 11.7 2.6 L11 3.4Z" fill="#fff"/><path d="M1.7 8.6 L3.4 10.3" stroke="#18bc9c" stroke-width="0.7"/></svg></div>
<div class="ob" style="left:1850px;top:298px;width:21px;background:#e74c3c"><svg style="left:5.5px;top:5px" width="10" height="12" viewBox="0 0 10 12"><rect x="0" y="1.6" width="10" height="1.4" fill="#fff"/><path d="M3 1.8 V0.5 H7 V1.8" fill="none" stroke="#fff" stroke-width="1"/><path d="M1 3.4 H9 L8.6 11.6 H1.4Z" fill="#fff"/><g fill="#e74c3c" opacity="0.55"><rect x="2.8" y="4.8" width="0.9" height="5.4"/><rect x="4.55" y="4.8" width="0.9" height="5.4"/><rect x="6.3" y="4.8" width="0.9" height="5.4"/></g></svg></div>
<div class="cb" style="left:272px;top:339px"></div>
<div class="c" style="left:296px;top:337px;width:69px">17479</div>
<div class="c" style="left:365px;top:337px;width:177px">G23022213329WRE</div>
<div class="c" style="left:542px;top:337px;width:73px">1242</div>
<div class="c" style="left:615px;top:337px;width:75px">GD666</div>
<div class="c" style="left:690px;top:337px;width:72px">810</div>
<div class="c" style="left:762px;top:337px;width:116px">9991956781</div>
<div class="c" style="left:878px;top:337px;width:69px">500</div>
<div class="c" style="left:947px;top:337px;width:89px">0</div>
<div class="c" style="left:1036px;top:337px;width:109px;color:#333"><span style="display:inline-block;width:11px;height:11px;border-radius:50%;background:#2c3e50;vertical-align:-1px;margin-right:4px"></span>充值钱包</div>
<div class="c" style="left:1145px;top:337px;width:58px"><span style="display:inline-block;width:11px;height:11px;border-radius:50%;background:#2c3e50;vertical-align:-1px;margin-right:4px"></span>11</div>
<div class="c" style="left:1203px;top:337px;width:99px">200</div>
<div class="c" style="left:1302px;top:337px;width:55px">50</div>
<div class="c" style="left:1357px;top:337px;width:92px"><span style="display:inline-block;width:11px;height:11px;border-radius:50%;background:#2c3e50;vertical-align:-1px;margin-right:4px"></span>收益中</div>
<div class="c" style="left:1449px;top:337px;width:178px">2023-02-22 13:40:49</div>
<div class="c" style="left:1627px;top:337px;width:179px">2023-02-22 13:40:49</div>
<div class="ob" style="left:1824px;top:337px;background:#18bc9c"><svg style="left:5px;top:5px" width="12" height="12" viewBox="0 0 12 12"><path d="M0.5 11.5 L1.2 8.3 L8 1.5 L10.5 4 L3.7 10.8Z" fill="#fff"/><path d="M8.6 0.9 L9.4 0.1 Q10 -0.3 10.6 0.3 L11.7 1.4 Q12.2 2 11.7 2.6 L11 3.4Z" fill="#fff"/><path d="M1.7 8.6 L3.4 10.3" stroke="#18bc9c" stroke-width="0.7"/></svg></div>
<div class="ob" style="left:1850px;top:337px;width:21px;background:#e74c3c"><svg style="left:5.5px;top:5px" width="10" height="12" viewBox="0 0 10 12"><rect x="0" y="1.6" width="10" height="1.4" fill="#fff"/><path d="M3 1.8 V0.5 H7 V1.8" fill="none" stroke="#fff" stroke-width="1"/><path d="M1 3.4 H9 L8.6 11.6 H1.4Z" fill="#fff"/><g fill="#e74c3c" opacity="0.55"><rect x="2.8" y="4.8" width="0.9" height="5.4"/><rect x="4.55" y="4.8" width="0.9" height="5.4"/><rect x="6.3" y="4.8" width="0.9" height="5.4"/></g></svg></div>
<div class="cb" style="left:272px;top:378px"></div>
<div class="c" style="left:296px;top:376px;width:69px">17478</div>
<div class="c" style="left:365px;top:376px;width:177px">G23022210898PUS</div>
<div class="c" style="left:542px;top:376px;width:73px">1243</div>
<div class="c" style="left:615px;top:376px;width:75px">SY666</div>
<div class="c" style="left:690px;top:376px;width:72px">sy001</div>
<div class="c" style="left:762px;top:376px;width:116px">8074838333</div>
<div class="c" style="left:878px;top:376px;width:69px">3000</div>
<div class="c" style="left:947px;top:376px;width:89px">0</div>
<div class="c" style="left:1036px;top:376px;width:109px;color:#333"><span style="display:inline-block;width:11px;height:11px;border-radius:50%;background:#2c3e50;vertical-align:-1px;margin-right:4px"></span>充值钱包</div>
<div class="c" style="left:1145px;top:376px;width:58px"><span style="display:inline-block;width:11px;height:11px;border-radius:50%;background:#2c3e50;vertical-align:-1px;margin-right:4px"></span>11</div>
<div class="c" style="left:1203px;top:376px;width:99px">216</div>
<div class="c" style="left:1302px;top:376px;width:55px">48</div>
<div class="c" style="left:1357px;top:376px;width:92px"><span style="display:inline-block;width:11px;height:11px;border-radius:50%;background:#2c3e50;vertical-align:-1px;margin-right:4px"></span>收益中</div>
<div class="c" style="left:1449px;top:376px;width:178px">2023-02-22 12:34:39</div>
<div class="c" style="left:1627px;top:376px;width:179px">2023-02-22 12:34:39</div>
<div class="ob" style="left:1824px;top:376px;background:#18bc9c"><svg style="left:5px;top:5px" width="12" height="12" viewBox="0 0 12 12"><path d="M0.5 11.5 L1.2 8.3 L8 1.5 L10.5 4 L3.7 10.8Z" fill="#fff"/><path d="M8.6 0.9 L9.4 0.1 Q10 -0.3 10.6 0.3 L11.7 1.4 Q12.2 2 11.7 2.6 L11 3.4Z" fill="#fff"/><path d="M1.7 8.6 L3.4 10.3" stroke="#18bc9c" stroke-width="0.7"/></svg></div>
<div class="ob" style="left:1850px;top:376px;width:21px;background:#e74c3c"><svg style="left:5.5px;top:5px" width="10" height="12" viewBox="0 0 10 12"><rect x="0" y="1.6" width="10" height="1.4" fill="#fff"/><path d="M3 1.8 V0.5 H7 V1.8" fill="none" stroke="#fff" stroke-width="1"/><path d="M1 3.4 H9 L8.6 11.6 H1.4Z" fill="#fff"/><g fill="#e74c3c" opacity="0.55"><rect x="2.8" y="4.8" width="0.9" height="5.4"/><rect x="4.55" y="4.8" width="0.9" height="5.4"/><rect x="6.3" y="4.8" width="0.9" height="5.4"/></g></svg></div>
<div class="cb" style="left:272px;top:417px"></div>
<div class="c" style="left:296px;top:415px;width:69px">17477</div>
<div class="c" style="left:365px;top:415px;width:177px">G23022112606S1I</div>
<div class="c" style="left:542px;top:415px;width:73px">1242</div>
<div class="c" style="left:615px;top:415px;width:75px">GD888</div>
<div class="c" style="left:690px;top:415px;width:72px">201</div>
<div class="c" style="left:762px;top:415px;width:116px">9335336181</div>
<div class="c" style="left:878px;top:415px;width:69px">500</div>
<div class="c" style="left:947px;top:415px;width:89px">0</div>
<div class="c" style="left:1036px;top:415px;width:109px;color:#333"><span style="display:inline-block;width:11px;height:11px;border-radius:50%;background:#2c3e50;vertical-align:-1px;margin-right:4px"></span>充值钱包</div>
<div class="c" style="left:1145px;top:415px;width:58px"><span style="display:inline-block;width:11px;height:11px;border-radius:50%;background:#2c3e50;vertical-align:-1px;margin-right:4px"></span>11</div>
<div class="c" style="left:1203px;top:415px;width:99px">200</div>
<div class="c" style="left:1302px;top:415px;width:55px">50</div>
<div class="c" style="left:1357px;top:415px;width:92px"><span style="display:inline-block;width:11px;height:11px;border-radius:50%;background:#2c3e50;vertical-align:-1px;margin-right:4px"></span>收益中</div>
<div class="c" style="left:1449px;top:415px;width:178px">2023-02-22 02:19:53</div>
<div class="c" style="left:1627px;top:415px;width:179px">2023-02-22 02:19:53</div>
<div class="ob" style="left:1824px;top:415px;background:#18bc9c"><svg style="left:5px;top:5px" width="12" height="12" viewBox="0 0 12 12"><path d="M0.5 11.5 L1.2 8.3 L8 1.5 L10.5 4 L3.7 10.8Z" fill="#fff"/><path d="M8.6 0.9 L9.4 0.1 Q10 -0.3 10.6 0.3 L11.7 1.4 Q12.2 2 11.7 2.6 L11 3.4Z" fill="#fff"/><path d="M1.7 8.6 L3.4 10.3" stroke="#18bc9c" stroke-width="0.7"/></svg></div>
<div class="ob" style="left:1850px;top:415px;width:21px;background:#e74c3c"><svg style="left:5.5px;top:5px" width="10" height="12" viewBox="0 0 10 12"><rect x="0" y="1.6" width="10" height="1.4" fill="#fff"/><path d="M3 1.8 V0.5 H7 V1.8" fill="none" stroke="#fff" stroke-width="1"/><path d="M1 3.4 H9 L8.6 11.6 H1.4Z" fill="#fff"/><g fill="#e74c3c" opacity="0.55"><rect x="2.8" y="4.8" width="0.9" height="5.4"/><rect x="4.55" y="4.8" width="0.9" height="5.4"/><rect x="6.3" y="4.8" width="0.9" height="5.4"/></g></svg></div>
<div class="cb" style="left:272px;top:456px"></div>
<div class="c" style="left:296px;top:454px;width:69px">17476</div>
<div class="c" style="left:365px;top:454px;width:177px">G23022113334MYL</div>
<div class="c" style="left:542px;top:454px;width:73px">1242</div>
<div class="c" style="left:615px;top:454px;width:75px">GD666</div>
<div class="c" style="left:690px;top:454px;width:72px">825</div>
<div class="c" style="left:762px;top:454px;width:116px">9253057203</div>
<div class="c" style="left:878px;top:454px;width:69px">500</div>
<div class="c" style="left:947px;top:454px;width:89px">20</div>
<div class="c" style="left:1036px;top:454px;width:109px;color:#333"><span style="display:inline-block;width:11px;height:11px;border-radius:50%;background:#2c3e50;vertical-align:-1px;margin-right:4px"></span>充值钱包</div>
<div class="c" style="left:1145px;top:454px;width:58px"><span style="display:inline-block;width:11px;height:11px;border-radius:50%;background:#2c3e50;vertical-align:-1px;margin-right:4px"></span>11</div>
<div class="c" style="left:1203px;top:454px;width:99px">200</div>
<div class="c" style="left:1302px;top:454px;width:55px">50</div>
<div class="c" style="left:1357px;top:454px;width:92px"><span style="display:inline-block;width:11px;height:11px;border-radius:50%;background:#2c3e50;vertical-align:-1px;margin-right:4px"></span>收益中</div>
<div class="c" style="left:1449px;top:454px;width:178px">2023-02-22 09:39:17</div>
<div class="c" style="left:1627px;top:454px;width:179px">2023-02-22 01:58:02</div>
<div class="ob" style="left:1824px;top:454px;background:#18bc9c"><svg style="left:5px;top:5px" width="12" height="12" viewBox="0 0 12 12"><path d="M0.5 11.5 L1.2 8.3 L8 1.5 L10.5 4 L3.7 10.8Z" fill="#fff"/><path d="M8.6 0.9 L9.4 0.1 Q10 -0.3 10.6 0.3 L11.7 1.4 Q12.2 2 11.7 2.6 L11 3.4Z" fill="#fff"/><path d="M1.7 8.6 L3.4 10.3" stroke="#18bc9c" stroke-width="0.7"/></svg></div>
<div class="ob" style="left:1850px;top:454px;width:21px;background:#e74c3c"><svg style="left:5.5px;top:5px" width="10" height="12" viewBox="0 0 10 12"><rect x="0" y="1.6" width="10" height="1.4" fill="#fff"/><path d="M3 1.8 V0.5 H7 V1.8" fill="none" stroke="#fff" stroke-width="1"/><path d="M1 3.4 H9 L8.6 11.6 H1.4Z" fill="#fff"/><g fill="#e74c3c" opacity="0.55"><rect x="2.8" y="4.8" width="0.9" height="5.4"/><rect x="4.55" y="4.8" width="0.9" height="5.4"/><rect x="6.3" y="4.8" width="0.9" height="5.4"/></g></svg></div>
<div class="cb" style="left:272px;top:495px"></div>
<div class="c" style="left:296px;top:493px;width:69px">17475</div>
<div class="c" style="left:365px;top:493px;width:177px">G2302211285956U</div>
<div class="c" style="left:542px;top:493px;width:73px">1242</div>
<div class="c" style="left:615px;top:493px;width:75px">GD888</div>
<div class="c" style="left:690px;top:493px;width:72px">206</div>
<div class="c" style="left:762px;top:493px;width:116px">9740141868</div>
<div class="c" style="left:878px;top:493px;width:69px">500</div>
<div class="c" style="left:947px;top:493px;width:89px">0</div>
<div class="c" style="left:1036px;top:493px;width:109px;color:#333"><span style="display:inline-block;width:11px;height:11px;border-radius:50%;background:#2c3e50;vertical-align:-1px;margin-right:4px"></span>充值钱包</div>
<div class="c" style="left:1145px;top:493px;width:58px"><span style="display:inline-block;width:11px;height:11px;border-radius:50%;background:#2c3e50;vertical-align:-1px;margin-right:4px"></span>11</div>
<div class="c" style="left:1203px;top:493px;width:99px">200</div>
<div class="c" style="left:1302px;top:493px;width:55px">50</div>
<div class="c" style="left:1357px;top:493px;width:92px"><span style="display:inline-block;width:11px;height:11px;border-radius:50%;background:#2c3e50;vertical-align:-1px;margin-right:4px"></span>收益中</div>
<div class="c" style="left:1449px;top:493px;width:178px">2023-02-22 00:41:00</div>
<div class="c" style="left:1627px;top:493px;width:179px">2023-02-22 00:41:00</div>
<div class="ob" style="left:1824px;top:493px;background:#18bc9c"><svg style="left:5px;top:5px" width="12" height="12" viewBox="0 0 12 12"><path d="M0.5 11.5 L1.2 8.3 L8 1.5 L10.5 4 L3.7 10.8Z" fill="#fff"/><path d="M8.6 0.9 L9.4 0.1 Q10 -0.3 10.6 0.3 L11.7 1.4 Q12.2 2 11.7 2.6 L11 3.4Z" fill="#fff"/><path d="M1.7 8.6 L3.4 10.3" stroke="#18bc9c" stroke-width="0.7"/></svg></div>
<div class="ob" style="left:1850px;top:493px;width:21px;background:#e74c3c"><svg style="left:5.5px;top:5px" width="10" height="12" viewBox="0 0 10 12"><rect x="0" y="1.6" width="10" height="1.4" fill="#fff"/><path d="M3 1.8 V0.5 H7 V1.8" fill="none" stroke="#fff" stroke-width="1"/><path d="M1 3.4 H9 L8.6 11.6 H1.4Z" fill="#fff"/><g fill="#e74c3c" opacity="0.55"><rect x="2.8" y="4.8" width="0.9" height="5.4"/><rect x="4.55" y="4.8" width="0.9" height="5.4"/><rect x="6.3" y="4.8" width="0.9" height="5.4"/></g></svg></div>
<div class="cb" style="left:272px;top:534px"></div>
<div class="c" style="left:296px;top:532px;width:69px">17474</div>
<div class="c" style="left:365px;top:532px;width:177px">G230221127678MX</div>
<div class="c" style="left:542px;top:532px;width:73px">1242</div>
<div class="c" style="left:615px;top:532px;width:75px">SY666</div>
<div class="c" style="left:690px;top:532px;width:72px">sy019</div>
<div class="c" style="left:762px;top:532px;width:116px">9563843522</div>
<div class="c" style="left:878px;top:532px;width:69px">500</div>
<div class="c" style="left:947px;top:532px;width:89px">0</div>
<div class="c" style="left:1036px;top:532px;width:109px;color:#333"><span style="display:inline-block;width:11px;height:11px;border-radius:50%;background:#2c3e50;vertical-align:-1px;margin-right:4px"></span>充值钱包</div>
<div class="c" style="left:1145px;top:532px;width:58px"><span style="display:inline-block;width:11px;height:11px;border-radius:50%;background:#2c3e50;vertical-align:-1px;margin-right:4px"></span>11</div>
<div class="c" style="left:1203px;top:532px;width:99px">200</div>
<div class="c" style="left:1302px;top:532px;width:55px">50</div>
<div class="c" style="left:1357px;top:532px;width:92px"><span style="display:inline-block;width:11px;height:11px;border-radius:50%;background:#2c3e50;vertical-align:-1px;margin-right:4px"></span>收益中</div>
<div class="c" style="left:1449px;top:532px;width:178px">2023-02-22 00:34:30</div>
<div class="c" style="left:1627px;top:532px;width:179px">2023-02-22 00:34:30</div>
<div class="ob" style="left:1824px;top:532px;background:#18bc9c"><svg style="left:5px;top:5px" width="12" height="12" viewBox="0 0 12 12"><path d="M0.5 11.5 L1.2 8.3 L8 1.5 L10.5 4 L3.7 10.8Z" fill="#fff"/><path d="M8.6 0.9 L9.4 0.1 Q10 -0.3 10.6 0.3 L11.7 1.4 Q12.2 2 11.7 2.6 L11 3.4Z" fill="#fff"/><path d="M1.7 8.6 L3.4 10.3" stroke="#18bc9c" stroke-width="0.7"/></svg></div>
<div class="ob" style="left:1850px;top:532px;width:21px;background:#e74c3c"><svg style="left:5.5px;top:5px" width="10" height="12" viewBox="0 0 10 12"><rect x="0" y="1.6" width="10" height="1.4" fill="#fff"/><path d="M3 1.8 V0.5 H7 V1.8" fill="none" stroke="#fff" stroke-width="1"/><path d="M1 3.4 H9 L8.6 11.6 H1.4Z" fill="#fff"/><g fill="#e74c3c" opacity="0.55"><rect x="2.8" y="4.8" width="0.9" height="5.4"/><rect x="4.55" y="4.8" width="0.9" height="5.4"/><rect x="6.3" y="4.8" width="0.9" height="5.4"/></g></svg></div>
<div class="abs" style="left:260px;top:579px;font-size:13px;line-height:20px;color:#333;white-space:nowrap">显示第 1 到第 10 条记录，总共 152 条记录 每页显示</div>
<div class="abs" style="left:568px;top:575px;width:50px;height:31px;border:1px solid #ddd;border-radius:3px;background:#f4f4f4"></div>
<div class="abs" style="left:581px;top:580px;font-size:12px;line-height:20px;color:#333">10</div>
<svg class="abs" style="left:597px;top:589px" width="8" height="4" viewBox="0 0 8 4"><path d="M0 4 H8 L4 0Z" fill="#333"/></svg>
<div class="abs" style="left:622px;top:579px;font-size:13px;line-height:20px;color:#333">条记录</div>
<div class="pg" style="left:1415px;width:65px;">上一页</div>
<div class="pg" style="left:1479px;width:34px;background:#2c3e50;border-color:#2c3e50;color:#fff;">1</div>
<div class="pg" style="left:1512px;width:33px;">2</div>
<div class="pg" style="left:1544px;width:33px;">3</div>
<div class="pg" style="left:1576px;width:33px;">4</div>
<div class="pg" style="left:1608px;width:33px;">5</div>
<div class="pg" style="left:1640px;width:37px;background:#fff;color:#777;">...</div>
<div class="pg" style="left:1676px;width:41px;">16</div>
<div class="pg" style="left:1716px;width:65px;">下一页</div>
<div class="abs" style="left:1785px;top:573px;width:50px;height:31px;border:1px solid #d2d6de;background:#fff"></div>
<div class="abs" style="left:1840px;top:574px;width:50px;height:31px;border:1px solid #ddd;border-radius:3px;background:#f4f4f4;color:#333;text-align:center;line-height:29px;font-size:12px">跳转</div>
</body></html>
